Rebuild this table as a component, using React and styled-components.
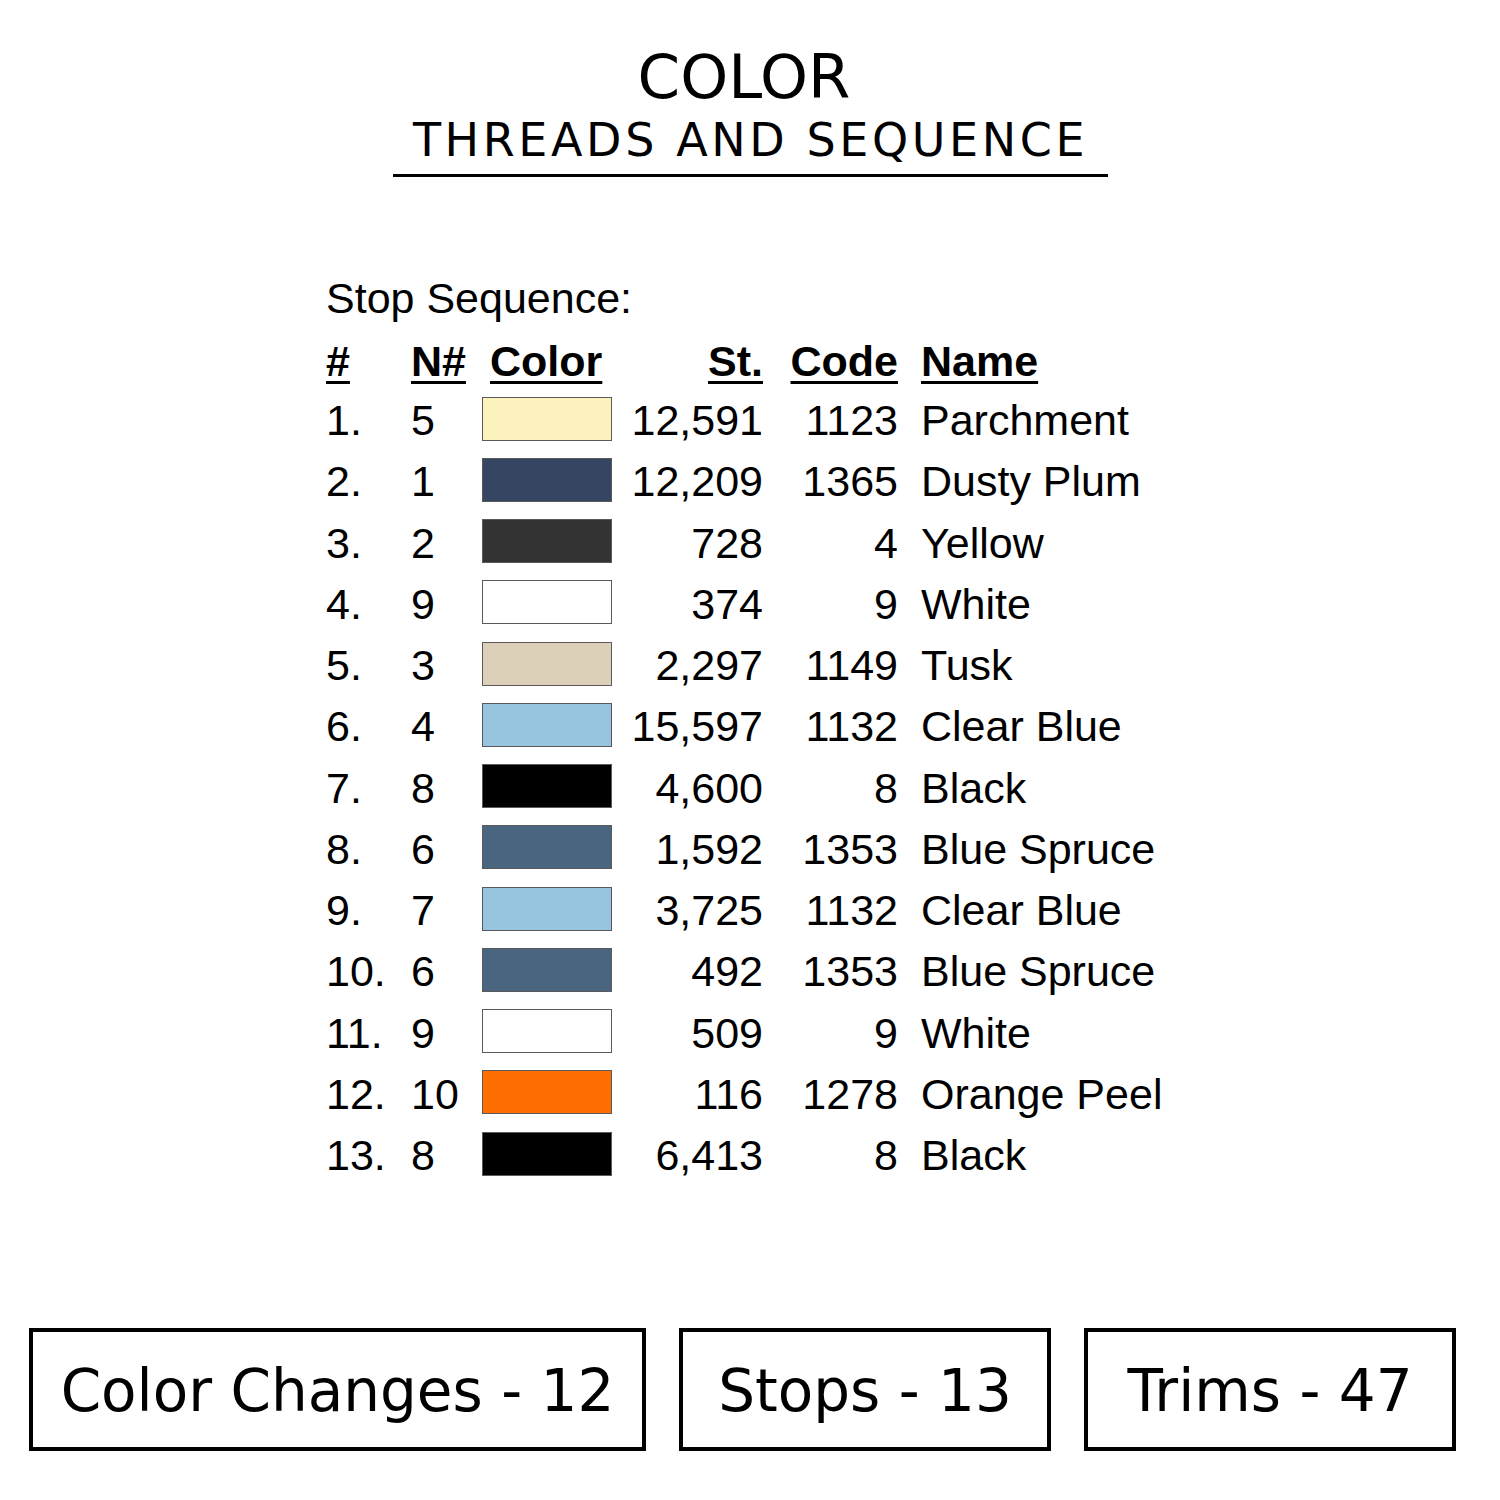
import React from "react";
import styled, { createGlobalStyle } from "styled-components";


const threads = [
  { n: 5,  color: "#fcf2be", st: "12,591", code: "1123", name: "Parchment" },
  { n: 1,  color: "#364561", st: "12,209", code: "1365", name: "Dusty Plum" },
  { n: 2,  color: "#333333", st: "728",    code: "4",    name: "Yellow" },
  { n: 9,  color: "#ffffff", st: "374",    code: "9",    name: "White" },
  { n: 3,  color: "#dcd1b8", st: "2,297",  code: "1149", name: "Tusk" },
  { n: 4,  color: "#97c5e0", st: "15,597", code: "1132", name: "Clear Blue" },
  { n: 8,  color: "#000000", st: "4,600",  code: "8",    name: "Black" },
  { n: 6,  color: "#4a6580", st: "1,592",  code: "1353", name: "Blue Spruce" },
  { n: 7,  color: "#97c5e0", st: "3,725",  code: "1132", name: "Clear Blue" },
  { n: 6,  color: "#4a6580", st: "492",    code: "1353", name: "Blue Spruce" },
  { n: 9,  color: "#ffffff", st: "509",    code: "9",    name: "White" },
  { n: 10, color: "#ff6e00", st: "116",    code: "1278", name: "Orange Peel" },
  { n: 8,  color: "#000000", st: "6,413",  code: "8",    name: "Black" },
]

const stats = [
  { label: "Color Changes - 12", width: 617 },
  { label: "Stops - 13",         width: 372 },
  { label: "Trims - 47",         width: 372 },
]


export default function App() {
  return (
    <>
      <GlobalStyle />
      <Page >
        <Heading >
          <Title >COLOR</Title >
          <Subtitle >THREADS AND SEQUENCE</Subtitle >
        </Heading >

        <Sequence >
          <Caption >Stop Sequence:</Caption >
          <Grid >
            <HeadCell >#</HeadCell >
            <HeadCell >N#</HeadCell >
            <HeadCell $pad >Color</HeadCell >
            <HeadCell $right >St.</HeadCell >
            <HeadCell $right >Code</HeadCell >
            <HeadCell $name >Name</HeadCell >

            {threads.map( ( t, i ) => (
              <React.Fragment key = {i} >
                <Cell >{i + 1}.</Cell >
                <Cell >{t.n}</Cell >
                <Cell ><Swatch $color = {t.color} /></Cell >
                <Cell $right >{t.st}</Cell >
                <Cell $right >{t.code}</Cell >
                <Cell $name >{t.name}</Cell >
              </React.Fragment >
            ) )}
          </Grid >
        </Sequence >

        <Stats >
          {stats.map( ( s ) => (
            <StatBox key = {s.label} $width = {s.width} >{s.label}</StatBox >
          ) )}
        </Stats >
      </Page >
    </>
  );
}



const GlobalStyle = createGlobalStyle`
  html, body {
    margin: 0;
    padding: 0;
    background: #ffffff;
  }
`;


const Page = styled.div`
  width: 1500px;
  height: 1500px;
  background: #ffffff;
  color: #000000;
  display: flex;
  flex-direction: column;
`;


const Heading = styled.div`
  display: flex;
  flex-direction: column;
  align-items: center;
  padding-top: 42px;
  font-family: "DejaVu Sans", sans-serif;
`;


const Title = styled.div`
  font-size: 61px;
  line-height: 70px;
  margin-left: -12px;
`;


const Subtitle = styled.div`
  width: 715px;
  margin-left: 1px;
  text-align: center;
  font-size: 46px;
  letter-spacing: 3.6px;
  line-height: 56px;
  padding-bottom: 6px;
  border-bottom: 3px solid #000000;
`;


const Sequence = styled.div`
  padding-left: 326px;
  padding-top: 96px;
  font-family: "Liberation Sans", Arial, sans-serif;
  font-size: 43px;
`;


const Caption = styled.div`
  line-height: 50px;
  margin-bottom: 9px;
`;


const Grid = styled.div`
  display: grid;
  grid-template-columns: 85px 71px 130px 151px 135px auto;
  grid-auto-rows: 61.25px;
  grid-template-rows: 58px;
  align-items: center;
`;


const HeadCell = styled.div`
  font-weight: bold;
  line-height: 58px;
  text-decoration: underline;
  text-decoration-thickness: 3px;
  text-underline-offset: 5px;
  text-align: ${( p ) => ( p.$right ? "right" : "left" )};
  padding-left: ${( p ) => ( p.$pad ? "8px" : p.$name ? "23px" : "0" )};
`;


const Cell = styled.div`
  line-height: 61.25px;
  white-space: nowrap;
  display: flex;
  align-items: center;
  height: 100%;
  justify-content: ${( p ) => ( p.$right ? "flex-end" : "flex-start" )};
  padding-left: ${( p ) => ( p.$name ? "23px" : "0" )};
`;


const Swatch = styled.div`
  width: 128px;
  height: 42px;
  margin-top: -4px;
  background: ${( p ) => p.$color};
  border: 1px solid #5a5a5a;
`;


const Stats = styled.div`
  display: flex;
  gap: 33px;
  padding-left: 29px;
  margin-top: 142px;
  font-family: "DejaVu Sans", sans-serif;
`;


const StatBox = styled.div`
  box-sizing: border-box;
  width: ${( p ) => p.$width}px;
  height: 123px;
  border: 4px solid #000000;
  display: flex;
  align-items: center;
  justify-content: center;
  font-size: 58px;
  padding-top: 2px;
`;
